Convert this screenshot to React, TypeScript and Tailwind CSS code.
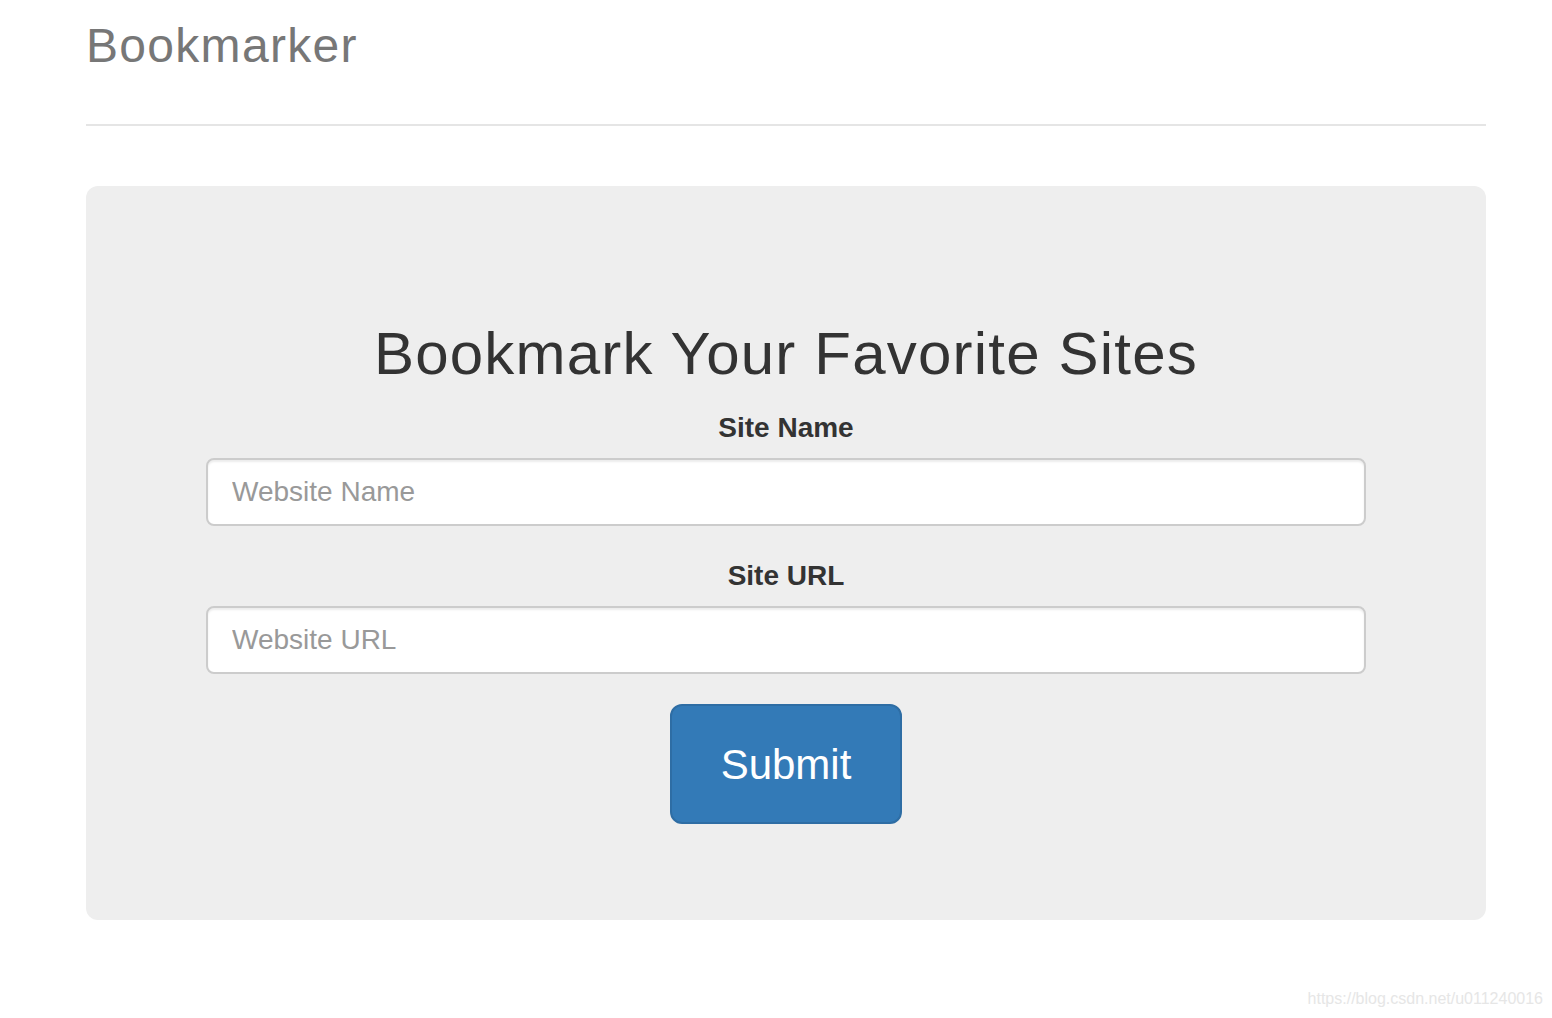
import React, { useState } from 'react';

const Field: React.FC<{
  label: string;
  placeholder: string;
  value: string;
  onChange: (v: string) => void;
}> = ({ label, placeholder, value, onChange }) => (
  <div className="mb-[30px] flex flex-col">
    <label className="mb-[10px] block text-center text-[28px] leading-[40px] font-bold text-[#333]">{label}</label>
    <input
      type="text"
      value={value}
      onChange={e => onChange(e.target.value)}
      placeholder={placeholder}
      className="h-[68px] w-full rounded-[8px] border-2 border-[#ccc] bg-white px-[24px] text-[28px] text-[#555] shadow-[inset_0_2px_2px_rgba(0,0,0,0.075)] outline-none placeholder:text-[#999]"
    />
  </div>
);

const App: React.FC = () => {
  const [siteName, setSiteName] = useState('');
  const [siteUrl, setSiteUrl] = useState('');

  return (
    <div className="relative min-h-screen bg-white font-['Liberation_Sans',Arial,sans-serif]">
      <div className="ml-[86px] w-[1400px]">
        <header className="mb-[60px] border-b-2 border-[#e5e5e5] pt-[6px] pb-[38px]">
          <h3 className="m-0 text-[48px] leading-[80px] font-normal tracking-[1.3px] text-[#777]">Bookmarker</h3>
        </header>

        <div className="rounded-[12px] bg-[#eee] px-[120px] pt-[135px] pb-[96px]">
          <h2 className="mb-[21px] text-center text-[60px] leading-[66px] font-normal tracking-[1.2px] text-[#333]">
            Bookmark Your Favorite Sites
          </h2>
          <form onSubmit={e => e.preventDefault()}>
            <Field label="Site Name" placeholder="Website Name" value={siteName} onChange={setSiteName} />
            <Field label="Site URL" placeholder="Website URL" value={siteUrl} onChange={setSiteUrl} />
            <div className="flex justify-center">
              <button
                type="submit"
                className="h-[120px] w-[232px] rounded-[12px] border-2 border-[#2e6da4] bg-[#337ab7] text-[42px] text-white"
              >
                Submit
              </button>
            </div>
          </form>
        </div>
      </div>

      <div className="absolute top-[988px] right-[9px] text-[16px] leading-[22px] text-[#e6e6e6]">
        https://blog.csdn.net/u011240016
      </div>
    </div>
  );
};

export default App;
